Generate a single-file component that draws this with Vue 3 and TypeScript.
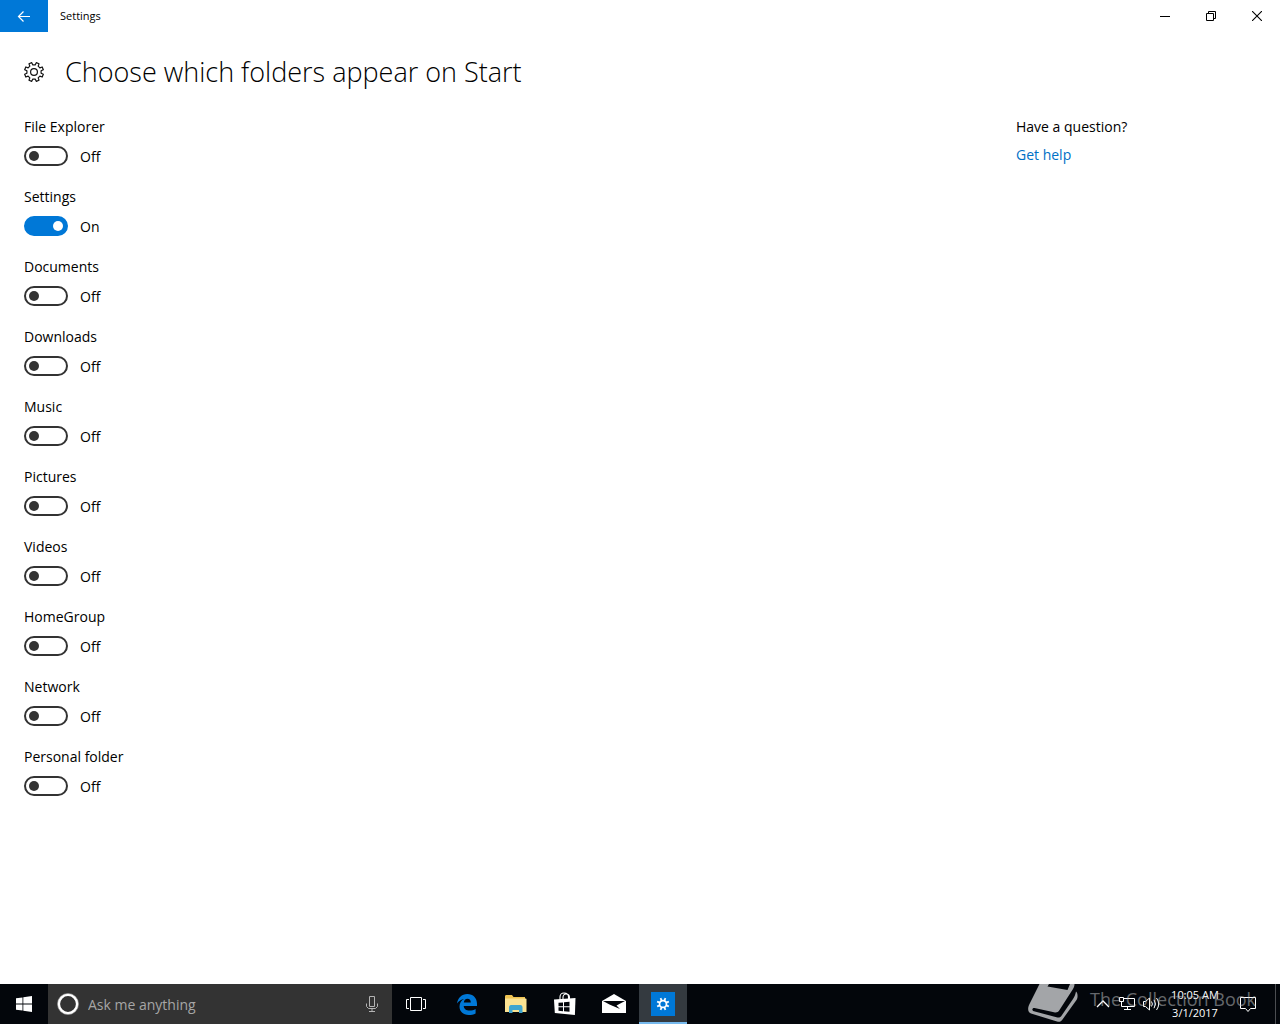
<script setup lang="ts">
import { ref } from 'vue'

interface Folder {
  id: string
  name: string
  on: boolean
}

const folders = ref<Folder[]>([
  { id: 'file-explorer', name: 'File Explorer', on: false },
  { id: 'settings', name: 'Settings', on: true },
  { id: 'documents', name: 'Documents', on: false },
  { id: 'downloads', name: 'Downloads', on: false },
  { id: 'music', name: 'Music', on: false },
  { id: 'pictures', name: 'Pictures', on: false },
  { id: 'videos', name: 'Videos', on: false },
  { id: 'homegroup', name: 'HomeGroup', on: false },
  { id: 'network', name: 'Network', on: false },
  { id: 'personal-folder', name: 'Personal folder', on: false },
])

const query = ref('')

// Outline of an eight-toothed gear centred on the origin.
function gearPath(outer: number, inner: number, tip: number, root: number): string {
  const points: string[] = []
  for (let i = 0; i < 8; i++) {
    const centre = 22.5 + i * 45
    const corners: [number, number][] = [
      [inner, centre - root],
      [outer, centre - tip],
      [outer, centre + tip],
      [inner, centre + root],
    ]
    for (const [radius, degrees] of corners) {
      const angle = (degrees * Math.PI) / 180
      points.push(`${(radius * Math.cos(angle)).toFixed(2)} ${(radius * Math.sin(angle)).toFixed(2)}`)
    }
  }
  return `M${points.join('L')}Z`
}

const headerGear = gearPath(9.6, 7.2, 9, 13)
const taskGear = gearPath(6.4, 4.4, 8, 11)
</script>

<template>
  <div class="desktop">
    <header class="titlebar">
      <button class="back" type="button" aria-label="Back">
        <svg width="14" height="14" viewBox="0 0 14 14" fill="none" stroke="#fff" stroke-width="1.2">
          <path d="M13 7.5H1.5M6.5 2.5l-5 5 5 5" />
        </svg>
      </button>
      <span class="app-name">Settings</span>
      <div class="window-buttons">
        <button type="button" aria-label="Minimize">
          <svg width="10" height="10" viewBox="0 0 10 10"><path d="M0 5h10v1H0z" /></svg>
        </button>
        <button type="button" aria-label="Restore">
          <svg width="10" height="10" viewBox="0 0 10 10" fill="none" stroke="#000">
            <path d="M.5 2.5h7v7h-7zM2.5 2.500v-2h7v7h-2" />
          </svg>
        </button>
        <button type="button" aria-label="Close">
          <svg width="10" height="10" viewBox="0 0 10 10" fill="none" stroke="#000" stroke-width="1.1">
            <path d="M0 0l10 10M10 0L0 10" />
          </svg>
        </button>
      </div>
    </header>

    <div class="page-head">
      <svg width="20" height="20" viewBox="-10 -10 20 20" fill="none" stroke="#111" stroke-width="1.2" stroke-linejoin="round" aria-hidden="true">
        <path :d="headerGear" />
        <circle r="3.400" />
      </svg>
      <h1>Choose which folders appear on Start</h1>
    </div>

    <main class="content">
      <div class="folders">
        <div v-for="folder in folders" :key="folder.id" class="folder">
          <label :for="folder.id">{{ folder.name }}</label>
          <div class="control">
            <input :id="folder.id" v-model="folder.on" type="checkbox" role="switch" class="switch" />
            <span>{{ folder.on ? 'On' : 'Off' }}</span>
          </div>
        </div>
      </div>
      <aside class="help">
        <p>Have a question?</p>
        <a href="#help">Get help</a>
      </aside>
    </main>

    <footer class="taskbar">
      <button class="start" type="button" aria-label="Start">
        <svg width="16" height="16" viewBox="0 0 16 16" fill="#fff">
          <path d="M0 2.300l6.500-.9v6.200H0zM7.300 1.300L16 0v7.600H7.300zM0 8.400h6.500v6.200L0 13.700zM7.300 8.400H16V16l-8.700-1.300z" />
        </svg>
      </button>

      <div class="search">
        <svg width="22" height="22" viewBox="0 0 22 22" fill="none" aria-hidden="true">
          <circle cx="11" cy="11" r="9.200" stroke="#fff" stroke-width="2.600" />
          <circle cx="11" cy="11" r="10.600" stroke="#999" stroke-width=".6" />
        </svg>
        <input v-model="query" type="text" placeholder="Ask me anything" aria-label="Ask me anything" />
        <button type="button" aria-label="Speak">
          <svg width="12" height="18" viewBox="0 0 12 18" fill="none" stroke="#b4b4b4">
            <path d="M3.500 1.500h5v10h-5zM.5 8.500v3l2 2h7l2-2v-3M6 13.500v3M3 16.500h6" />
          </svg>
        </button>
      </div>

      <nav class="apps" aria-label="Taskbar">
        <button type="button" class="task-view" aria-label="Task View">
          <svg width="20" height="14" viewBox="0 0 20 14" fill="none" stroke="#fff">
            <path d="M4.500 .5h11v13h-11zM3 2.500H.5v9H3M17 2.500h2.500v9H17" />
          </svg>
        </button>
        <button type="button" aria-label="Microsoft Edge">
          <svg width="20" height="21" viewBox="0 0 20 21" fill="#0078d7">
            <path d="M0 9.500C.8 4 4.700 0 10.300 0 16.200 0 20 4.100 20 9.800V12H6.700c.2 3 2.700 4.600 5.900 4.600 2.200 0 4.200-.6 6-1.700v4.500c-2 1.100-4.300 1.600-6.900 1.600-5.700 0-9.200-3.400-9.200-8.400 0-3.200 1.700-6 4.500-7.500C4.200 5.600 1.800 7 0 9.500zM6.800 8.400h7C13.800 6.100 12.700 4.700 10.500 4.700S7.100 6.200 6.800 8.400z" />
          </svg>
        </button>
        <button type="button" aria-label="File Explorer">
          <svg width="22" height="18" viewBox="0 0 22 18">
            <path d="M0 1.500C0 .7.500 0 1.300 0H7l1.500 2H20v3H0z" fill="#efc352" />
            <path d="M0 3.500h20.500c.6 0 1 .4 1 1V17H0z" fill="#fbe292" />
            <path d="M4 18v-5.500C4 11 4.800 10 6 10h9.500c1.200 0 2 1 2 2.500V18H14v-3H7.500v3z" fill="#3fa5cf" />
          </svg>
        </button>
        <button type="button" aria-label="Store">
          <svg width="22" height="24" viewBox="0 0 22 24">
            <path d="M6 8V5c0-2.500 1.500-4 4-4s4.500 1.500 4.500 4v2M9 7V5.500C9 3.500 10 2 12 2s3.500 1.300 3.500 3.500V7" fill="none" stroke="#fff" stroke-width="1.100" />
            <path d="M0 7.500L21.500 6l-.6 17L.8 21z" fill="#fff" />
            <path d="M4.500 10.800l4.500-.4v3.900H4.500zM10 10.300l5.500-.5v4.500H10zM4.500 15.300H9v3.900l-4.500-.4zM10 15.300h5.500v4.500l-5.500-.5z" fill="#03060b" />
          </svg>
        </button>
        <button type="button" aria-label="Mail">
          <svg width="24" height="20" viewBox="0 0 24 20">
            <path d="M0 7L12 0l12 7v12H0z" fill="#fff" />
            <path d="M1 7h22l-8.500 4.500L18 15 7.500 10.500z" fill="#03060b" />
          </svg>
        </button>
        <button type="button" class="active" aria-label="Settings">
          <svg width="24" height="24" viewBox="-12 -12 24 24">
            <path d="M-12-12h24v24h-24z" fill="#0078d7" />
            <path :d="taskGear" fill="#fff" />
            <circle r="2.600" fill="#0078d7" />
          </svg>
        </button>
      </nav>

      <div class="tray">
        <button type="button" aria-label="Show hidden icons">
          <svg width="14" height="8" viewBox="0 0 14 8" fill="none" stroke="#fff" stroke-width="1.300"><path d="M1 7l6-6 6 6" /></svg>
        </button>
        <button type="button" aria-label="Network">
          <svg width="16" height="14" viewBox="0 0 16 14" fill="none" stroke="#fff">
            <path d="M5 1.500h10.500v8h-13V5M.5.5h4v4h-4zM8.500 9.500v3M5 12.500h7" />
          </svg>
        </button>
        <button type="button" aria-label="Volume">
          <svg width="17" height="14" viewBox="0 0 17 14" fill="none" stroke="#fff">
            <path d="M.5 4.500h2l4-3.500v12l-4-3.500h-2zM8.500 4.500q1.800 2.500 0 5M11 2.800q3 4.200 0 8.400M13.500 1q4.400 6 0 12" />
          </svg>
        </button>
        <button type="button" class="clock">
          <span>10:05 AM</span>
          <span>3/1/2017</span>
        </button>
        <button type="button" class="action" aria-label="Action center">
          <svg width="16" height="17" viewBox="0 0 16 17" fill="none" stroke="#fff">
            <path d="M.5 1.500h15v11h-5l-2.500 3-2.500-3h-5z" />
          </svg>
        </button>
        <span class="peek"></span>
      </div>

      <div class="watermark">
        <svg width="50" height="40" viewBox="0 0 50 40" aria-hidden="true">
          <path
            d="M11.500 0L1.500 20C-.5 24-.5 28 3 29.500l26 8c2.500.8 4 0 5.500-2L48.500 16c1.500-2 1.500-7-.5-8.500-.6 3-1.400 5-3 7.500L34 31c-1.500 2.500-3 3-5.500 2.300L6 27.300c-2.500-.8-2-3.600.5-3.300L26 28.300c2.500.5 4 0 5.500-2.300L45 5c1-2 1.500-3 1.500-5H42l-2.500 6-20-3.500L21 0z"
            fill="#a3a5a8"
          />
        </svg>
        <span>The Collection Book</span>
      </div>
    </footer>
  </div>
</template>

<style>
body {
  margin: 0;
  background: #fff;
}
</style>

<style scoped>
.desktop {
  display: flex;
  flex-direction: column;
  min-height: 100vh;
  color: #000;
  font-family: "Open Sans", "Noto Sans", sans-serif;
  font-size: 14px;
  line-height: 22px;
}

button {
  display: flex;
  align-items: center;
  justify-content: center;
  padding: 0;
  border: 0;
  background: none;
  color: inherit;
  font: inherit;
}

svg {
  display: block;
  flex: none;
}

.titlebar {
  display: flex;
  align-items: center;
  height: 32px;
}

.back {
  width: 48px;
  height: 32px;
  background: #0078d7;
}

.app-name {
  margin-left: 12px;
  font-size: 11px;
}

.window-buttons {
  display: flex;
  margin-left: auto;
}

.window-buttons button {
  width: 46px;
  height: 32px;
}

.page-head {
  display: flex;
  align-items: center;
  gap: 21px;
  height: 80px;
  padding: 0 24px;
}

h1 {
  margin: 0;
  font-size: 27px;
  font-weight: 300;
  line-height: 36px;
}

.content {
  display: flex;
  flex: 1;
  justify-content: space-between;
  padding: 4px 24px 24px;
}

.folders {
  display: flex;
  flex-direction: column;
  gap: 19px;
}

.folder {
  display: flex;
  flex-direction: column;
  gap: 7px;
}

.control {
  display: flex;
  align-items: center;
  gap: 12px;
}

.control span {
  padding-top: 2px;
  line-height: 20px;
}

.switch {
  display: flex;
  align-items: center;
  box-sizing: border-box;
  width: 44px;
  height: 20px;
  margin: 0;
  padding: 0 3px;
  border: 2px solid #333;
  border-radius: 10px;
  background: #fff;
  appearance: none;
}

.switch::before {
  width: 10px;
  height: 10px;
  border-radius: 50%;
  background: #333;
  content: "";
}

.switch:checked {
  justify-content: flex-end;
  border-color: #0078d7;
  background: #0078d7;
}

.switch:checked::before {
  background: #fff;
}

.help {
  width: 240px;
}

.help p {
  margin: 0 0 6px;
}

.help a {
  color: #0070c6;
  text-decoration: none;
}

.taskbar {
  position: relative;
  display: flex;
  height: 40px;
  overflow: hidden;
  background: #03060b;
  color: #fff;
}

.start {
  width: 48px;
}

.search {
  display: flex;
  align-items: center;
  box-sizing: border-box;
  width: 344px;
  padding: 0 14px 0 9px;
  background: #333;
}

.search input {
  flex: 1;
  min-width: 0;
  margin-left: 9px;
  padding: 2px 0 0;
  border: 0;
  outline: 0;
  background: none;
  color: #fff;
  font: inherit;
}

.search input::placeholder {
  color: #a6a6a6;
  opacity: 1;
}

.apps {
  display: flex;
  gap: 1px;
}

.apps button {
  box-sizing: border-box;
  width: 48px;
}

.apps .task-view {
  margin-right: 2px;
}

.apps .active {
  border-top: 2px solid #343a40;
  border-bottom: 2px solid #76b9ed;
  background: #343a40;
}

.tray {
  display: flex;
  align-items: center;
  margin-left: auto;
}

.tray button {
  width: 24px;
  height: 40px;
}

.tray .clock {
  flex-direction: column;
  width: 64px;
  font-size: 11px;
  line-height: 18px;
}

.tray .action {
  width: 42px;
}

.peek {
  box-sizing: border-box;
  width: 5px;
  height: 40px;
  margin-left: 6px;
  border-left: 1px solid #4b4d51;
}

.watermark {
  position: absolute;
  top: 0;
  right: 24px;
  display: flex;
  gap: 12px;
  pointer-events: none;
}

.watermark span {
  color: rgba(200, 202, 205, 0.5);
  font-size: 18px;
  line-height: 30px;
}
</style>
